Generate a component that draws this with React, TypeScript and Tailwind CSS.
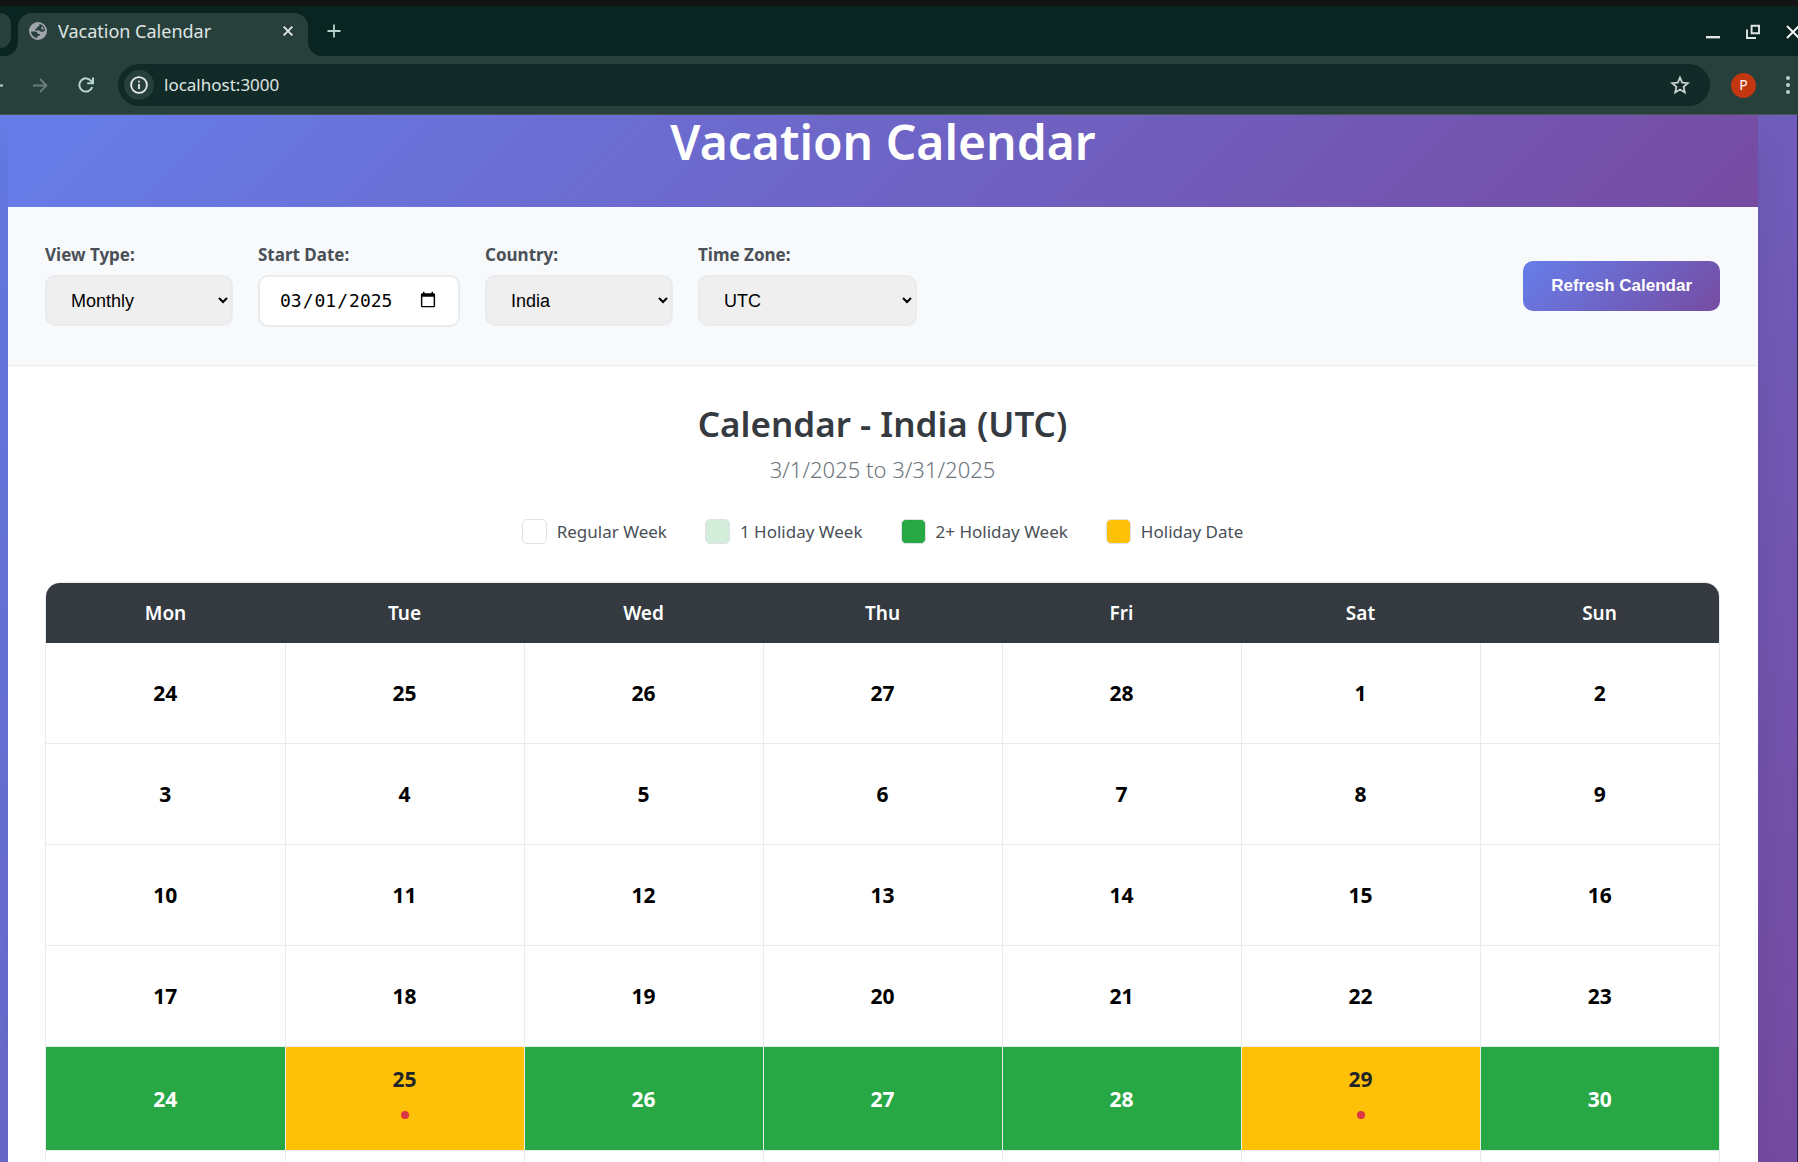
import React, { useState } from "react";

const DAYS = ["Mon", "Tue", "Wed", "Thu", "Fri", "Sat", "Sun"];

type Tone = "regular" | "busy" | "holiday";
type Day = { n: number | null; tone?: Tone };

const WEEKS: Day[][] = [
  [24, 25, 26, 27, 28, 1, 2].map((n) => ({ n })),
  [3, 4, 5, 6, 7, 8, 9].map((n) => ({ n })),
  [10, 11, 12, 13, 14, 15, 16].map((n) => ({ n })),
  [17, 18, 19, 20, 21, 22, 23].map((n) => ({ n })),
  [
    { n: 24, tone: "busy" },
    { n: 25, tone: "holiday" },
    { n: 26, tone: "busy" },
    { n: 27, tone: "busy" },
    { n: 28, tone: "busy" },
    { n: 29, tone: "holiday" },
    { n: 30, tone: "busy" },
  ],
  DAYS.map(() => ({ n: null })),
];

const TONES: Record<Tone, string> = {
  regular: "bg-white text-black",
  busy: "bg-[#28a745] text-white",
  holiday: "bg-[#ffc107] text-[#212529]",
};

const LEGEND = [
  { label: "Regular Week", swatch: "bg-white" },
  { label: "1 Holiday Week", swatch: "bg-[#d4edda]" },
  { label: "2+ Holiday Week", swatch: "bg-[#28a745]" },
  { label: "Holiday Date", swatch: "bg-[#ffc107]" },
];

function TabStrip() {
  return (
    <div className="flex h-[50px] shrink-0 items-start bg-[#0a2421] pt-[7px]">
      <div className="flex h-[43px] w-[18px] shrink-0 items-start bg-[#28403c]">
        <div className="h-[43px] w-[18px] rounded-br-[14px] bg-[#0a2421]">
          <div className="h-[35px] w-[11px] rounded-r-[12px] bg-[#28403c]" />
        </div>
      </div>
      <div className="flex h-[43px] w-[290px] items-start rounded-t-[14px] bg-[#28403c] px-[11px] pt-[6px]">
        <div className="flex h-[24px] w-full items-center">
          <svg viewBox="0 0 18 18" className="h-[18px] w-[18px] shrink-0">
            <circle cx="9" cy="9" r="9" fill="#a0a4ac" />
            <g fill="#28403c">
              <path d="M10.4 2 L10.4 3.6 Q10.2 4.8 8.8 4.8 L8.2 4.8 L8.2 6 Q8 6.8 7 6.8 L6.2 6.8 L6.2 8.4 L10.4 8.4 Q11.6 8.6 11.6 9.8 L14 9.8 Q15 9.4 16 8.4 A7 7 0 0 0 10.4 2 Z M12.2 5.4 A5 5 0 0 1 13.4 4.6 L15 7.6 L12.6 7.6 Z" fillRule="evenodd" />
              <path d="M2 9.4 L5.6 9.4 Q8.6 9.4 8.8 12 L11 12 Q11.2 13.6 10.2 13.8 L8.4 14 L8.4 16 A7 7 0 0 1 2 9.4 Z" />
            </g>
          </svg>
          <span className="ml-[11px] flex-1 text-[18px] leading-6 text-[#dfe5e3]">Vacation Calendar</span>
          <button aria-label="Close tab" className="mr-px flex h-4 w-4 items-center justify-center">
            <svg viewBox="0 0 10 10" className="h-[10px] w-[10px]" stroke="#e3e8e6" strokeWidth="1.9">
              <path d="M.6.6l8.8 8.8M9.4.6L.6 9.4" />
            </svg>
          </button>
        </div>
      </div>
      <div className="h-[43px] w-[14px] bg-[#28403c]">
        <div className="h-full w-full rounded-bl-[14px] bg-[#0a2421]" />
      </div>
      <button aria-label="New tab" className="mt-[11px] ml-[5px] flex h-[14px] w-[14px]">
        <svg viewBox="0 0 14 14" className="h-[14px] w-[14px]" stroke="#b5d5cd" strokeWidth="1.8">
          <path d="M7 .5v13M.5 7h13" />
        </svg>
      </button>
      <div className="-mr-[2px] ml-auto flex items-center gap-[26px] pt-[10px]">
        <button aria-label="Minimize">
          <svg viewBox="0 0 14 16" className="h-4 w-[14px]" fill="#dfe6e4">
            <path d="M0 13h14v2.4H0z" />
          </svg>
        </button>
        <button aria-label="Restore">
          <svg viewBox="0 0 14 16" className="h-4 w-[14px]" fill="none" stroke="#dfe6e4" strokeWidth="1.9">
            <path d="M5.6 2.8h7.4v7.4H5.6zM1 6.4v8.6h9" />
          </svg>
        </button>
        <button aria-label="Close">
          <svg viewBox="0 0 14 16" className="h-4 w-[14px]" stroke="#eef2f1" strokeWidth="2">
            <path d="M1 3l12 12M13 3L1 15" />
          </svg>
        </button>
      </div>
    </div>
  );
}

function Toolbar() {
  return (
    <div className="flex h-[59px] shrink-0 items-center border-b border-[#4a5654] bg-[#28403c]">
      <button aria-label="Back" className="-ml-3 shrink-0">
        <svg viewBox="0 0 15 15" className="h-[15px] w-[15px]" fill="none" stroke="#b5d5cd" strokeWidth="1.8">
          <path d="M15 7.5H1.5M7.5 1L1 7.5 7.5 14" />
        </svg>
      </button>
      <button aria-label="Forward" className="ml-[30px] shrink-0">
        <svg viewBox="0 0 15 15" className="h-[15px] w-[15px]" fill="none" stroke="#6b7f7a" strokeWidth="1.8">
          <path d="M0 7.5h13.5M7 1l6.5 6.5L7 14" />
        </svg>
      </button>
      <button aria-label="Reload" className="ml-[30px] shrink-0">
        <svg viewBox="0 0 16 16" className="h-4 w-4" fill="none" stroke="#b5d5cd" strokeWidth="2">
          <path d="M14.2 10.2A6.6 6.6 0 1 1 13.4 4.2L14.6 6M15 .6V6.2H9.2" />
        </svg>
      </button>
      <div className="ml-6 flex h-[42px] flex-1 items-center rounded-full bg-[#122a27] pr-5 pl-[6px]">
        <button aria-label="Site information" className="flex h-[30px] w-[30px] shrink-0 items-center justify-center rounded-full bg-[#28403c]">
          <svg viewBox="0 0 18 18" className="h-[18px] w-[18px]" fill="none" stroke="#e6ebe9" strokeWidth="1.8">
            <circle cx="9" cy="9" r="7.9" />
            <path d="M9 8v5M9 4.8v1.8" />
          </svg>
        </button>
        <input
          aria-label="Address"
          defaultValue="localhost:3000"
          className="ml-[10px] min-w-0 flex-1 bg-transparent text-[17px] text-[#dfe5e3] outline-none"
        />
        <button aria-label="Bookmark this tab" className="shrink-0">
          <svg viewBox="0 0 20 20" className="h-5 w-5" fill="none" stroke="#c9d1ce" strokeWidth="1.8">
            <path d="M10 2.6l2.2 5.1 5.6.5-4.2 3.7 1.2 5.5L10 14.5l-4.8 2.9 1.2-5.5L2.2 8.2l5.6-.5z" />
          </svg>
        </button>
      </div>
      <button
        aria-label="Profile"
        className="ml-[21px] flex h-[25px] w-[25px] shrink-0 items-center justify-center rounded-full bg-[#c2370f] text-[14px] leading-none text-white"
      >
        P
      </button>
      <button aria-label="Menu" className="mr-[8px] ml-[30px] shrink-0">
        <svg viewBox="0 0 4 18" className="h-[18px] w-1" fill="#b5d5cd">
          <circle cx="2" cy="2" r="2" />
          <circle cx="2" cy="9" r="2" />
          <circle cx="2" cy="16" r="2" />
        </svg>
      </button>
    </div>
  );
}

function Field({ id, label, children }: { id: string; label: string; children: React.ReactNode }) {
  return (
    <div className="flex flex-col gap-[10px]">
      <label htmlFor={id} className="text-[17px] leading-5 font-bold text-[#495057]">
        {label}
      </label>
      <div className="flex h-[52px] items-start">{children}</div>
    </div>
  );
}

function SelectBox({ id, label, options, width }: { id: string; label: string; options: string[]; width: string }) {
  return (
    <Field id={id} label={label}>
      <select
        id={id}
        className={`h-[51px] rounded-[10px] border-2 border-[#e9ecef] bg-[#efefef] pr-[2px] pl-5 font-['Liberation_Sans',Arial,sans-serif] text-[18px] text-black ${width}`}
      >
        {options.map((o) => (
          <option key={o}>{o}</option>
        ))}
      </select>
    </Field>
  );
}

function Controls() {
  const [date, setDate] = useState("2025-03-01");
  return (
    <div className="flex flex-wrap items-center justify-between gap-6 border-b border-[#e9ecef] bg-[#f8f9fa] py-[38px] pr-[38px] pl-[37px]">
      <div className="flex flex-wrap gap-[25px]">
        <SelectBox id="view" label="View Type:" options={["Monthly", "Quarterly"]} width="w-[188px]" />
        <Field id="start" label="Start Date:">
          <input
            id="start"
            type="date"
            value={date}
            onChange={(e) => setDate(e.target.value)}
            className="h-[52px] w-[202px] rounded-[10px] border-2 border-[#e9ecef] bg-white px-[19px] pb-[2px] font-['DejaVu_Sans_Mono',monospace] text-[18px] text-black"
          />
        </Field>
        <SelectBox id="country" label="Country:" options={["India", "United States"]} width="w-[188px]" />
        <SelectBox id="zone" label="Time Zone:" options={["UTC", "Asia/Kolkata"]} width="w-[219px]" />
      </div>
      <button className="h-[50px] rounded-[10px] bg-[linear-gradient(135deg,#667eea_0%,#764ba2_100%)] px-7 font-['Liberation_Sans',Arial,sans-serif] text-[17px] font-bold text-white">
        Refresh Calendar
      </button>
    </div>
  );
}

function Calendar() {
  return (
    <div className="overflow-hidden rounded-t-[15px] border border-[#e9ecef]">
      <table className="w-full table-fixed border-collapse text-center">
        <thead>
          <tr className="h-[60px] bg-[#343a40] text-[19px] text-white">
            {DAYS.map((d) => (
              <th key={d} scope="col" className="p-0 font-semibold">
                {d}
              </th>
            ))}
          </tr>
        </thead>
        <tbody className="text-[21px] leading-7 font-bold">
          {WEEKS.map((week, i) => (
            <tr key={i} className="border-b border-[#e9ecef]">
              {week.map(({ n, tone = "regular" }, j) => (
                <td key={j} className={`border-r border-[#e9ecef] p-0 last:border-r-0 ${TONES[tone]}`}>
                  <div className={`flex flex-col items-center justify-center ${i === 4 ? "h-[103px]" : "h-[100px]"}`}>
                    {n}
                    {tone === "holiday" && <span className="mt-[18px] mb-[13px] h-2 w-2 rounded-full bg-[#dc3545]" />}
                  </div>
                </td>
              ))}
            </tr>
          ))}
        </tbody>
      </table>
    </div>
  );
}

export default function App() {
  return (
    <div className="flex h-screen flex-col overflow-hidden border-t-[6px] border-[#141414] bg-[#0a2421] font-['Noto_Sans',sans-serif]">
      <TabStrip />
      <Toolbar />
      <div className="min-h-0 flex-1 overflow-hidden border-r border-[#2b2140] bg-[linear-gradient(135deg,#667eea_0%,#764ba2_100%)] pr-[39px] pl-2">
        <main className="bg-white shadow-[0_20px_40px_rgba(0,0,0,0.1)]">
          <header className="bg-[linear-gradient(135deg,#667eea_0%,#764ba2_100%)] pb-[38px] text-center text-white">
            <h1 className="text-[48px] leading-[54px] font-semibold">Vacation Calendar</h1>
          </header>
          <Controls />
          <section className="pt-[37px] pr-[38px] pl-[37px]">
            <h2 className="text-center text-[35px] leading-[42px] font-semibold text-[#343a40]">Calendar - India (UTC)</h2>
            <p className="mt-[10px] text-center text-[22px] leading-7 font-light text-[#6c757d]">3/1/2025 to 3/31/2025</p>
            <ul className="mt-9 mb-[38px] flex flex-wrap justify-center gap-[38px]">
              {LEGEND.map((item) => (
                <li key={item.label} className="flex h-[25px] items-center gap-[10px] text-[17px] leading-6 text-[#495057]">
                  <span className={`h-[25px] w-[25px] rounded-[5px] border border-[#dee2e6] ${item.swatch}`} />
                  {item.label}
                </li>
              ))}
            </ul>
            <Calendar />
          </section>
        </main>
      </div>
    </div>
  );
}
